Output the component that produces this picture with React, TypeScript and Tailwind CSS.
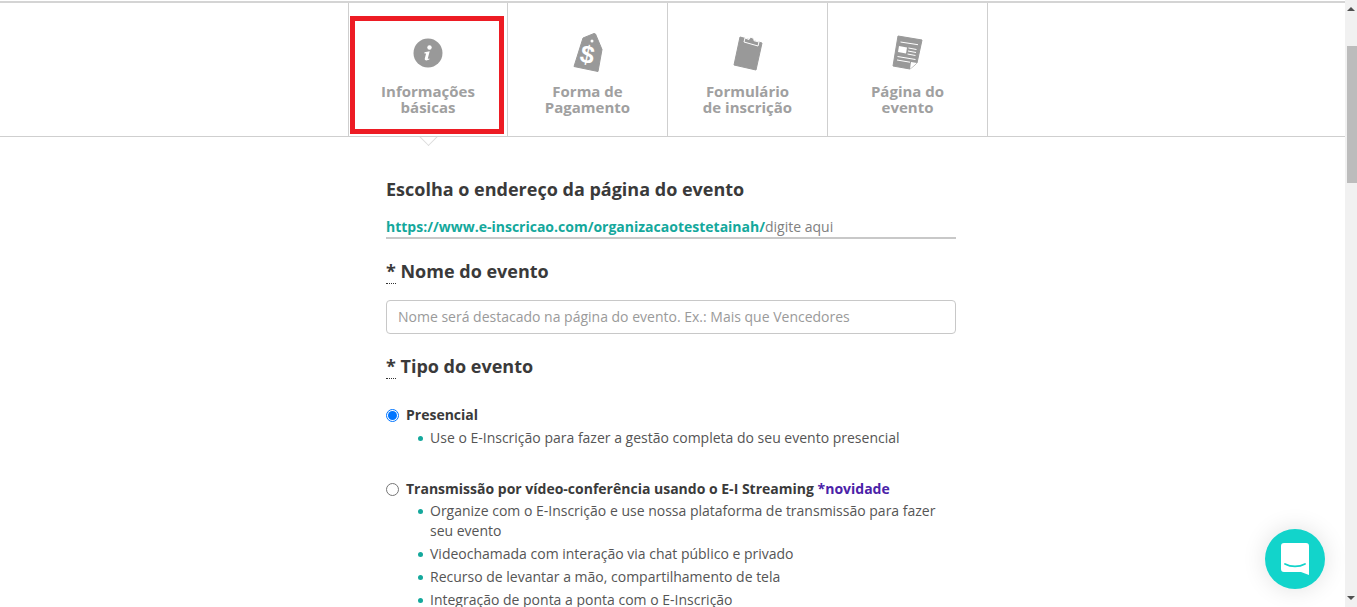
const tabBase = 'h-full flex flex-col items-center border-r border-[#cfcfcf] text-[15px] leading-[16px] font-bold text-[#a0a0a0] text-center';

function InfoIcon() {
  return (
    <svg width="30" height="30" viewBox="0 0 30 30">
      <circle cx="15" cy="15" r="14.5" fill="#999" />
      <circle cx="16.5" cy="9.5" r="2.2" fill="#fff" />
      <path d="M11.5 14.2l5.2-1-1.900 7.200c-.1.5.3.7 1.700 0l-.2 1.100c-1.500 1-5 1.700-4.500-1l1.300-5.100-1.700.2z" fill="#fff" />
    </svg>
  );
}

function TagIcon() {
  return (
    <svg width="30" height="41" viewBox="0 0 30 41">
      <path d="M10 6l11-4.500 1.500.5 6.500 15.500-4 22-24-5z" fill="#999" stroke="#999" strokeLinejoin="round" />
      <circle cx="19" cy="9" r="1.500" fill="#fff" />
      <text x="14" y="31" textAnchor="middle" transform="rotate(12 14 24)" className="font-['Liberation_Sans',sans-serif] text-[25px] font-bold" fill="#fff">$</text>
    </svg>
  );
}

function ClipboardIcon() {
  return (
    <svg width="30" height="38" viewBox="0 0 30 38">
      <path d="M7 4l22 6-6 27-22-5z" fill="#999" stroke="#999" strokeLinejoin="round" />
      <path d="M12 5l-1 4 14 4 1-4-5-1.300c.3-3.500-4.300-4.500-5-1.200z" fill="#999" stroke="#fff" strokeWidth="1" />
    </svg>
  );
}

function NewsIcon() {
  return (
    <svg width="31" height="37" viewBox="0 0 31 37">
      <path d="M6 3l24 4-5 23-7 6-17-3z" fill="#999" stroke="#999" strokeLinejoin="round" />
      <path d="M8.500 9l17.500 2.700M16.500 15l8 1.500M16 18l8 1.500M15.500 21l8 1.500M5.500 23.500l18 3M5 27l13 2.200" stroke="#fff" strokeWidth="1" />
      <path d="M7 13l8 1.500-1 6-8-1.500z" fill="#fff" />
      <path d="M25 30l-7 6 1-7z" fill="#fff" />
    </svg>
  );
}

function Bullet({ children }: { children: React.ReactNode }) {
  return (
    <li className="flex">
      <span className="w-[5px] h-[5px] mt-[8px] mr-[7px] ml-[2px] shrink-0 rounded-full bg-[#14a89c]" />
      <span>{children}</span>
    </li>
  );
}

function Required() {
  return <span className="border-b border-dotted border-[#333] leading-none">*</span>;
}

export default function App() {
  return (
    <div className="relative flex h-[607px] w-full overflow-hidden bg-white font-['Open_Sans',sans-serif] text-[#3a3a3a]">
      <div className="flex-1 min-w-0">
        <div className="mt-[1px] h-[136px] border-t-2 border-b border-t-[#d4d4d4] border-b-[#cfcfcf] pl-[348px]">
          <div className="flex h-full border-l border-[#cfcfcf] w-fit">
            <div className={`${tabBase} w-[159px]`}>
              <div className="ml-[1px] mt-[13px] h-[118px] w-[154px] self-start flex flex-col items-center border-[5px] border-[#ed1c24] pl-[2px]">
                <div className="mt-[17px] h-[30px]"><InfoIcon /></div>
                <div className="mt-[15px]">Informações<br />básicas</div>
              </div>
            </div>
            <div className={`${tabBase} w-40`}>
              <div className="mt-[29px] h-[41px]"><TagIcon /></div>
              <div className="mt-[10px]">Forma de<br />Pagamento</div>
            </div>
            <div className={`${tabBase} w-40`}>
              <div className="mt-[30px] h-[38px]"><ClipboardIcon /></div>
              <div className="mt-[12px]">Formulário<br />de inscrição</div>
            </div>
            <div className={`${tabBase} w-40`}>
              <div className="mt-[30px] h-[37px]"><NewsIcon /></div>
              <div className="mt-[13px]">Página do<br />evento</div>
            </div>
          </div>
        </div>

        <div className="ml-[386px] w-[570px]">
          <h2 className="mt-[39px] text-[18px] leading-[26px] font-bold">Escolha o endereço da página do evento</h2>
          <div className="mt-[14px] h-[23px] border-b-2 border-[#c8c8c8] text-[14px] leading-[22px]">
            <span className="font-bold text-[#14a89c]">https://www.e-inscricao.com/organizacaotestetainah/</span>
            <span className="text-[#808080]">digite aqui</span>
          </div>
          <h2 className="mt-[19px] text-[18px] leading-[26px] font-bold"><Required /> Nome do evento</h2>
          <div className="mt-[16px] h-[34px] rounded-[4px] border border-[#c8c8c8] pl-[11px] text-[14px] leading-[32px] text-[#9a9a9a]">
            Nome será destacado na página do evento. Ex.: Mais que Vencedores
          </div>
          <h2 className="mt-[19px] text-[18px] leading-[26px] font-bold"><Required /> Tipo do evento</h2>

          <div className="mt-[26px] flex items-center text-[14px] leading-[20px] font-bold">
            <span className="mr-[7px] flex h-[13px] w-[13px] items-center justify-center rounded-full border border-[#0075ff]">
              <span className="h-[9px] w-[9px] rounded-full bg-[#0075ff]" />
            </span>
            Presencial
          </div>
          <ul className="ml-[30px] mt-[3px] text-[14px] leading-[20px] text-[#555]">
            <Bullet>Use o E-Inscrição para fazer a gestão completa do seu evento presencial</Bullet>
          </ul>

          <div className="mt-[31px] flex items-center text-[14px] leading-[20px] font-bold">
            <span className="mr-[7px] h-[13px] w-[13px] rounded-full border border-[#767676]" />
            Transmissão por vídeo-conferência usando o E-I Streaming&nbsp;<span className="text-[#4b22a8]">*novidade</span>
          </div>
          <ul className="ml-[30px] mt-[2px] w-[530px] text-[14px] leading-[20px] text-[#555] space-y-[3px]">
            <Bullet>Organize com o E-Inscrição e use nossa plataforma de transmissão para fazer seu evento</Bullet>
            <Bullet>Videochamada com interação via chat público e privado</Bullet>
            <Bullet>Recurso de levantar a mão, compartilhamento de tela</Bullet>
            <Bullet>Integração de ponta a ponta com o E-Inscrição</Bullet>
          </ul>
        </div>
      </div>

      <div className="w-3 shrink-0 flex flex-col items-center bg-[#f1f1f1]">
        <span className="mt-[7px] h-0 w-0 border-x-[4px] border-b-[4px] border-x-transparent border-b-[#505050]" />
        <div className="mt-[35px] ml-[2px] h-[137px] w-[10px] bg-[#bcbcbc]" />
        <div className="flex-1" />
        <span className="mb-[7px] h-0 w-0 border-x-[4px] border-t-[4px] border-x-transparent border-t-[#505050]" />
      </div>

      <div className="absolute left-[417px] top-[137px] h-[11px] w-[22px] overflow-hidden">
        <div className="mx-auto -mt-[9px] h-[15px] w-[15px] rotate-45 border-b border-r border-[#dcdcdc] bg-white" />
      </div>

      <div className="absolute left-[1265px] top-[529px] flex h-[60px] w-[60px] items-center justify-center rounded-full bg-[#12d4cb] shadow-[0_0_24px_rgba(0,0,0,0.12)]">
        <svg width="28" height="32" viewBox="0 0 28 32">
          <path d="M3 0h22a3 3 0 0 1 3 3v29l-8-3H3a3 3 0 0 1-3-3V3a3 3 0 0 1 3-3z" fill="#fff" />
          <path d="M4 21c6 3.200 14 3.200 20 0" fill="none" stroke="#12d4cb" strokeWidth="1.800" strokeLinecap="round" />
        </svg>
      </div>
    </div>
  );
}
